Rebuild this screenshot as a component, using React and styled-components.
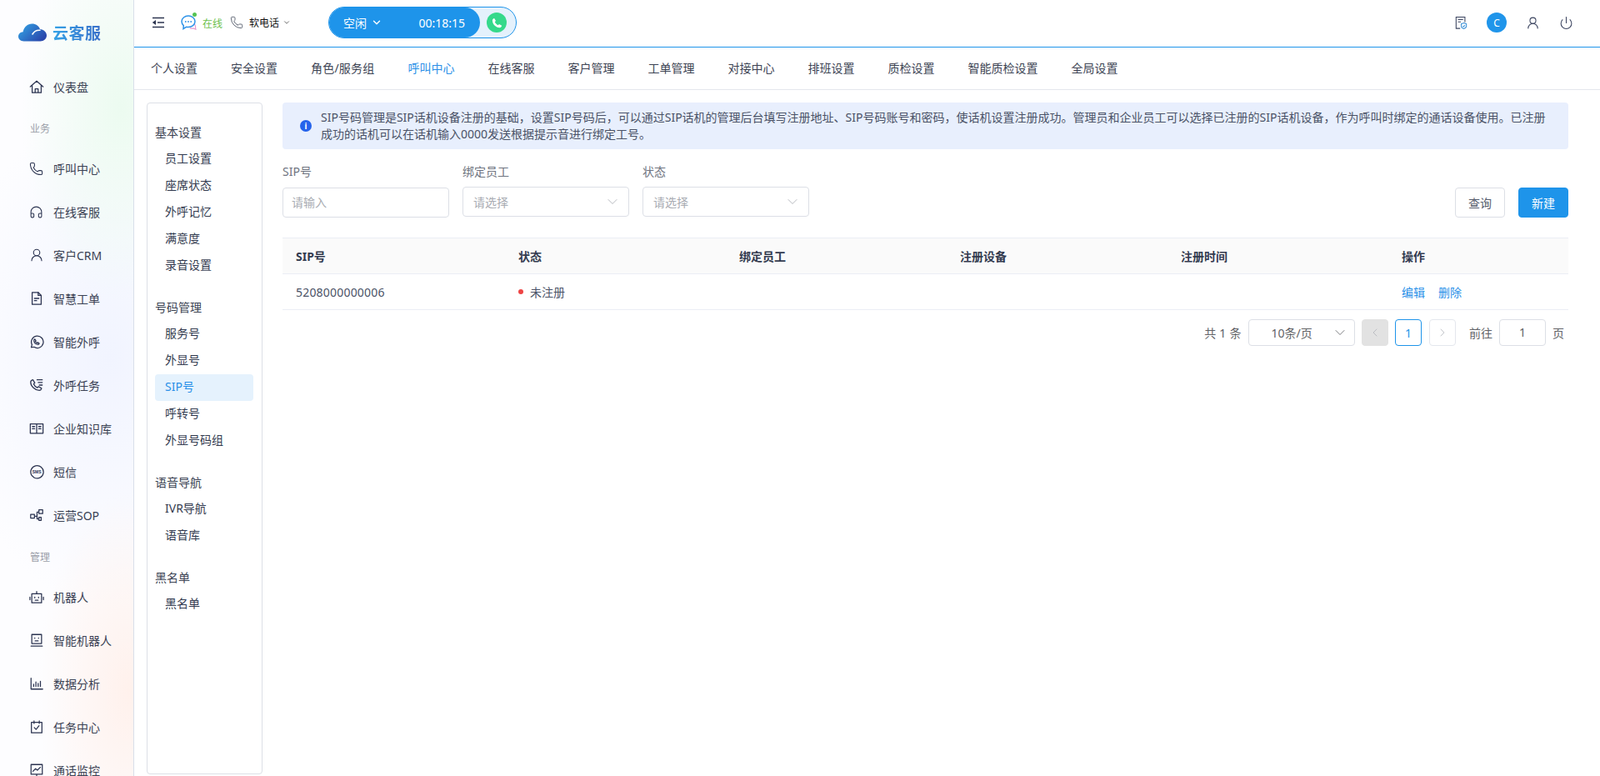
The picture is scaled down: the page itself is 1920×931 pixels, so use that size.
import React from "react";
import styled, { createGlobalStyle } from "styled-components";
import {
  Phone,
  Headphones,
  UserRound,
  ChevronDown,
  ChevronLeft,
  ChevronRight,
  Power,
} from "lucide-react";

const FONT = `"Noto Sans", "Noto Sans CJK SC", sans-serif`;

const GlobalStyle = createGlobalStyle`
  html, body, #root {
    margin: 0;
    height: 100%;
    overflow: hidden;
  }
  body {
    font-family: ${FONT};
    font-size: 14px;
    color: #333b4f;
    background: #fff;
  }
  * {
    box-sizing: border-box;
  }
`;

const Line = ({ children, size = 18 }) => (
  <svg width={size} height={size} viewBox="0 0 20 20" fill="none" stroke="currentColor" strokeWidth="1.4" strokeLinecap="round" strokeLinejoin="round">
    {children}
  </svg>
);

const sideIcons = {
  house: (
    <Line>
      <path d="M1.500 10 10 2.500 18.500 10M4 8v10h12V8M8 18v-5h4v5" />
    </Line>
  ),
  phone: <Phone size={17} strokeWidth={1.5} />,
  headset: <Headphones size={17} strokeWidth={1.5} />,
  user: <UserRound size={18} strokeWidth={1.5} />,
  ticket: (
    <Line>
      <path d="M4 2h8l4 4v12H4Z" />
      <path d="M12 2v4h4M7 10h6M7 13h3" />
    </Line>
  ),
  whatsapp: (
    <Line>
      <path d="M2.800 17.500 3.800 14A8 8 0 1 1 6.500 17Z" />
      <path d="M7.500 6.500 9 8.500l-.8 1c.5.900 1.200 1.600 2.200 2.100l1-.8 2 1.400c-.3 1.100-1 1.500-1.900 1.400-2.900-.4-4.900-2.500-5.100-5-.1-1 .4-1.900 1.100-2.100Z" />
    </Line>
  ),
  outcall: (
    <Line>
      <path d="M5 3 7.500 7 6 8.500c.8 2 2.700 4 5 5l1.500-1.500 4 2.300c-.4 1.800-1.600 2.700-3.100 2.700C8 17 2 11.500 2 6.300 2 4.700 3.200 3.400 5 3Z" />
      <path d="M10.500 3h7M12 6.500h5.500M13.500 10h4" />
    </Line>
  ),
  book: (
    <Line>
      <path d="M1.500 4h17v12.500h-17ZM10 4v12.500M4.300 7.500h3M4.300 10.500h3M12.700 7.500h3M12.700 10.500h3" />
    </Line>
  ),
  sms: (
    <svg width="18" height="18" viewBox="0 0 20 20" fill="none" stroke="currentColor" strokeWidth="1.4">
      <path d="M3.500 15A8.500 8.500 0 1 1 7 18Z" strokeLinejoin="round" />
      <text x="10.200" y="12" fontSize="5.500" fontWeight="700" textAnchor="middle" fill="currentColor" stroke="none" fontFamily="Liberation Sans, sans-serif">SMS</text>
    </svg>
  ),
  sop: (
    <Line>
      <path d="M2 9h5v5H2ZM13 3h5v5h-5ZM13 13h3v4h-3ZM7 11.500h3.500V6H13M10.500 11.500V15H13" />
    </Line>
  ),
  bot: (
    <Line>
      <path d="M3.500 6h13v12h-13ZM10 6V3M1 10.500v3.500M19 10.500v3.500M7.500 10.500v1M12.500 10.500v1M8 14.500h4" />
    </Line>
  ),
  face: (
    <Line>
      <path d="M3.500 2.500h13v12h-13ZM2.500 18h15M7.500 7v.6M12.500 7v.6M8 11h4" />
    </Line>
  ),
  chart: (
    <Line>
      <path d="M2.500 3v14.500h15.500M6 14v-3M9 14V8M12 14v-4M15 14V7" />
    </Line>
  ),
  task: (
    <Line>
      <path d="M3 4h14v14H3ZM6.500 2v3.500M13.500 2v3.500M6.800 11l2.400 2.500 4-5" />
    </Line>
  ),
  monitor: (
    <Line>
      <path d="M2.500 2.500h15v13h-15ZM10 15.500V18M5 11.500l3.500-3.500 2.500 2 4-4" />
    </Line>
  ),
};

const menu = [
  { type: "item", icon: "house", text: "仪表盘" },
  { type: "label", text: "业务" },
  { type: "item", icon: "phone", text: "呼叫中心" },
  { type: "item", icon: "headset", text: "在线客服" },
  { type: "item", icon: "user", text: "客户CRM" },
  { type: "item", icon: "ticket", text: "智慧工单" },
  { type: "item", icon: "whatsapp", text: "智能外呼" },
  { type: "item", icon: "outcall", text: "外呼任务" },
  { type: "item", icon: "book", text: "企业知识库" },
  { type: "item", icon: "sms", text: "短信" },
  { type: "item", icon: "sop", text: "运营SOP" },
  { type: "label", text: "管理" },
  { type: "item", icon: "bot", text: "机器人" },
  { type: "item", icon: "face", text: "智能机器人" },
  { type: "item", icon: "chart", text: "数据分析" },
  { type: "item", icon: "task", text: "任务中心" },
  { type: "item", icon: "monitor", text: "通话监控" },
];

const tabs = ["个人设置", "安全设置", "角色/服务组", "呼叫中心", "在线客服", "客户管理", "工单管理", "对接中心", "排班设置", "质检设置", "智能质检设置", "全局设置"];

const tree = [
  { title: "基本设置", items: ["员工设置", "座席状态", "外呼记忆", "满意度", "录音设置"] },
  { title: "号码管理", items: ["服务号", "外显号", "SIP号", "呼转号", "外显号码组"] },
  { title: "语音导航", items: ["IVR导航", "语音库"] },
  { title: "黑名单", items: ["黑名单"] },
];

const columns = ["SIP号", "状态", "绑定员工", "注册设备", "注册时间", "操作"];

const App = () => {
  return (
    <>
      <GlobalStyle />
      <Page>
        <Sidebar>
          <Logo>
            <svg width="34" height="22" viewBox="0 0 34 22">
              <defs>
                <linearGradient id="cloud" x1="0" y1="0" x2="1" y2="0.6">
                  <stop offset="0" stopColor="#33a8e8" />
                  <stop offset="1" stopColor="#2a49ad" />
                </linearGradient>
              </defs>
              <path fill="url(#cloud)" d="M6.500 21.500C2.800 21.500 0 19 0 15.800 0 12.800 2.400 10.400 5.600 10.200 6.800 4.400 11 .5 16.500.5 21 .5 24.600 3 26 7c4.500.4 8 3.600 8 7.500 0 4-3.400 7-7.500 7Z" />
              <path fill="none" stroke="#fff" strokeWidth="1.600" strokeLinecap="round" d="M17 13c2-3.500 5-5 9-4.700" />
            </svg>
            <LogoText>云客服</LogoText>
          </Logo>
          {menu.map((m, i) =>
            m.type === "label" ? (
              <SideLabel key={i}>{m.text}</SideLabel>
            ) : (
              <SideItem key={i}>
                <SideIcon>{sideIcons[m.icon]}</SideIcon>
                {m.text}
              </SideItem>
            )
          )}
        </Sidebar>
        <Main>
          <Header>
            <IndentIcon width="16" height="14" viewBox="0 0 16 14">
              <path d="M1 1.500h14M7 7h8M1 12.500h14" stroke="#2c3550" strokeWidth="1.500" fill="none" />
              <path d="M.8 7 5 4v6Z" fill="#2c3550" />
            </IndentIcon>
            <OnlineIcon>
              <svg width="19" height="18" viewBox="0 0 19 18" fill="none">
                <path d="M16.500 11c.8 1.200 1.300 2.500 1 4l.4 2.200-2.900-1.200c-1.600.4-3 .2-4.200-.4" stroke="#e49ad0" strokeWidth="1.200" />
                <path d="M9 1c4.400 0 8 3 8 6.800s-3.600 6.800-8 6.800c-.8 0-1.700-.1-2.400-.3L3 16.500l.3-3.900C1.900 11.400 1 9.700 1 7.800 1 4 4.600 1 9 1Z" stroke="#2f93e8" strokeWidth="1.500" />
                <circle cx="5.800" cy="8" r=".9" fill="#2f93e8" />
                <circle cx="9" cy="8" r=".9" fill="#2f93e8" />
                <circle cx="12.200" cy="8" r=".9" fill="#2f93e8" />
              </svg>
              <OnlineDot />
            </OnlineIcon>
            <OnlineText>在线</OnlineText>
            <HeaderPhone>
              <Phone size={16} strokeWidth={1.4} />
            </HeaderPhone>
            <SoftPhone>
              软电话
              <ChevronDown size={10} strokeWidth={2} color="#555" />
            </SoftPhone>
            <CallPill>
              <CallStatus>
                <StatusPick>
                  空闲
                  <ChevronDown size={14} strokeWidth={2.4} />
                </StatusPick>
                <CallTime>00:18:15</CallTime>
              </CallStatus>
              <CallButton>
                <svg width="15" height="15" viewBox="0 0 20 20">
                  <path fill="#fff" d="M5.500 2.500 8 6.600 6.400 8.300c.9 2.200 2.900 4.300 5.200 5.300l1.700-1.600 4.200 2.400c-.4 2-1.700 3.100-3.400 3.100C8 17.500 2.500 11.800 2.500 6c0-1.800 1.200-3.100 3-3.500Z" />
                </svg>
              </CallButton>
            </CallPill>
            <HeaderRight>
              <svg width="15" height="17" viewBox="0 0 17 18" fill="none" stroke="#3c4560" strokeWidth="1.200">
                <path d="M7 16.500H1.500V1h12v7" />
                <path d="M4 4.500h7M4 7.500h4" />
                <path d="M12 9l3.500 1.300v3c0 1.800-1.500 3-3.500 3.700-2-.7-3.500-1.900-3.500-3.700v-3Z" stroke="#3f93d8" />
                <path d="M10.500 13l1.200 1.200 2-2.200" stroke="#3f93d8" />
              </svg>
              <Avatar>C</Avatar>
              <UserRound size={17} strokeWidth={1.5} color="#3c4560" />
              <Power size={17} strokeWidth={1.5} color="#3c4560" />
            </HeaderRight>
          </Header>
          <Tabs>
            {tabs.map((t) => (
              <Tab key={t} $active={t === "呼叫中心"} $wide={t.includes("/")}>
                {t}
              </Tab>
            ))}
          </Tabs>
          <Body>
            <TreePanel>
              {tree.map((g) => (
                <TreeGroup key={g.title}>
                  <TreeTitle>{g.title}</TreeTitle>
                  {g.items.map((it) => (
                    <TreeItem key={it} $active={it === "SIP号"}>
                      {it}
                    </TreeItem>
                  ))}
                </TreeGroup>
              ))}
            </TreePanel>
            <Content>
              <Alert>
                <AlertIcon>i</AlertIcon>
                <AlertText>
                  SIP号码管理是SIP话机设备注册的基础，设置SIP号码后，可以通过SIP话机的管理后台填写注册地址、SIP号码账号和密码，使话机设置注册成功。管理员和企业员工可以选择已注册的SIP话机设备，作为呼叫时绑定的通话设备使用。已注册成功的话机可以在话机输入0000发送根据提示音进行绑定工号。
                </AlertText>
              </Alert>
              <Filters>
                <Field>
                  <FieldLabel>SIP号</FieldLabel>
                  <TextInput placeholder="请输入" readOnly />
                </Field>
                <Field>
                  <FieldLabel>绑定员工</FieldLabel>
                  <FakeSelect>
                    请选择
                    <ChevronDown size={20} strokeWidth={1} color="#a8abb2" />
                  </FakeSelect>
                </Field>
                <Field>
                  <FieldLabel>状态</FieldLabel>
                  <FakeSelect>
                    请选择
                    <ChevronDown size={20} strokeWidth={1} color="#a8abb2" />
                  </FakeSelect>
                </Field>
                <Actions>
                  <Button>查询</Button>
                  <Button $primary>新建</Button>
                </Actions>
              </Filters>
              <TableHead>
                {columns.map((c) => (
                  <HeadCell key={c}>{c}</HeadCell>
                ))}
              </TableHead>
              <TableRow>
                <NumberCell>5208000000006</NumberCell>
                <Cell>
                  <RedDot />
                  未注册
                </Cell>
                <Cell />
                <Cell />
                <Cell />
                <Cell>
                  <LinkText>编辑</LinkText>
                  <LinkText>删除</LinkText>
                </Cell>
              </TableRow>
              <Pager>
                <TotalText>共 1 条</TotalText>
                <SizeSelect>
                  10条/页
                  <ChevronDown size={20} strokeWidth={1} color="#606266" />
                </SizeSelect>
                <PageBtn $disabled>
                  <ChevronLeft size={16} strokeWidth={1} />
                </PageBtn>
                <PageBtn $current>1</PageBtn>
                <PageBtn>
                  <ChevronRight size={16} strokeWidth={1} />
                </PageBtn>
                <PagerText>前往</PagerText>
                <JumpBox>1</JumpBox>
                <PagerText>页</PagerText>
              </Pager>
            </Content>
          </Body>
        </Main>
      </Page>
    </>
  );
};

const Page = styled.div`
  display: flex;
  height: 100vh;
  overflow: hidden;
`;

const Sidebar = styled.aside`
  flex: 0 0 161px;
  height: 100%;
  overflow: hidden;
  border-right: 1px solid #d9dfea;
  background:
    radial-gradient(ellipse 120px 230px at 145px 130px, #ecfbf0 0%, rgba(236, 251, 240, 0) 100%),
    radial-gradient(ellipse 110px 240px at 155px 830px, #fff1ec 0%, rgba(255, 241, 236, 0) 100%),
    radial-gradient(ellipse 190px 300px at 130px 430px, #f1f4ff 0%, rgba(241, 244, 255, 0) 100%),
    #fdfdff;
`;

const Logo = styled.div`
  height: 78px;
  display: flex;
  align-items: center;
  gap: 7px;
  padding-left: 22px;
`;

const LogoText = styled.span`
  font-size: 19px;
  font-weight: 700;
  letter-spacing: 0.5px;
  color: transparent;
  background: linear-gradient(90deg, #35a2e6, #3a6fc9);
  background-clip: text;
  -webkit-background-clip: text;
`;

const SideItem = styled.div`
  height: 52px;
  display: flex;
  align-items: center;
  padding-left: 35px;
  font-size: 14px;
  color: #3a4153;
`;

const SideIcon = styled.span`
  width: 29px;
  display: flex;
  align-items: center;
  color: #2b3350;
`;

const SideLabel = styled.div`
  height: 46px;
  display: flex;
  align-items: center;
  padding: 2px 0 0 36px;
  font-size: 12px;
  color: #9a9ea8;
`;

const Main = styled.div`
  flex: 1;
  min-width: 0;
  display: flex;
  flex-direction: column;
`;

const Header = styled.header`
  flex: 0 0 57px;
  display: flex;
  align-items: center;
  padding: 0 32px 2px 21px;
  border-bottom: 1px solid #1e94ea;
`;

const IndentIcon = styled.svg`
  margin-right: 19px;
`;

const OnlineIcon = styled.span`
  position: relative;
  display: flex;
  margin-right: 7px;
`;

const OnlineDot = styled.i`
  position: absolute;
  top: -3px;
  right: 0;
  width: 5px;
  height: 5px;
  border-radius: 50%;
  background: #55c353;
`;

const OnlineText = styled.span`
  font-size: 12px;
  color: #6cc04a;
  margin-right: 9px;
  padding-top: 2px;
`;

const HeaderPhone = styled.span`
  display: flex;
  color: #555c6c;
  margin-right: 7px;
`;

const SoftPhone = styled.span`
  display: flex;
  align-items: center;
  gap: 4px;
  font-size: 12px;
  color: #111;
  margin-right: 45px;
`;

const CallPill = styled.div`
  width: 226px;
  height: 38px;
  display: flex;
  align-items: center;
  border: 1px solid #1e94ea;
  border-radius: 19px;
  background: #e4f1fc;
`;

const CallStatus = styled.div`
  width: 181px;
  height: 36px;
  display: flex;
  align-items: center;
  justify-content: space-between;
  padding: 0 18px 0 17px;
  border-radius: 18px;
  background: #1e94ea;
  color: #fff;
`;

const StatusPick = styled.span`
  display: flex;
  align-items: center;
  gap: 5px;
  font-size: 14px;
`;

const CallTime = styled.span`
  font-size: 14px;
`;

const CallButton = styled.span`
  width: 24px;
  height: 24px;
  margin-left: 8px;
  display: flex;
  align-items: center;
  justify-content: center;
  border-radius: 50%;
  background: #35d98b;
`;

const HeaderRight = styled.div`
  margin-left: auto;
  display: flex;
  align-items: center;
  gap: 23px;
`;

const Avatar = styled.span`
  width: 24px;
  height: 24px;
  display: flex;
  align-items: center;
  justify-content: center;
  border-radius: 50%;
  background: #2095ea;
  color: #fff;
  font-size: 12px;
`;

const Tabs = styled.nav`
  flex: 0 0 51px;
  display: flex;
  align-items: center;
  gap: 40px;
  padding: 0 0 2px 20px;
  border-bottom: 1px solid #e4e7ed;
`;

const Tab = styled.span`
  font-size: 14px;
  letter-spacing: ${(p) => (p.$wide ? "0.2px" : "0")};
  color: ${(p) => (p.$active ? "#2a90e8" : "#3c4353")};
`;

const Body = styled.div`
  flex: 1;
  min-height: 0;
  display: flex;
  gap: 24px;
  padding: 15px 38px 2px 15px;
`;

const TreePanel = styled.div`
  flex: 0 0 139px;
  padding: 19px 10px 0 9px;
  border: 1px solid #dcdfe6;
  border-radius: 4px;
`;

const TreeGroup = styled.div`
  margin-bottom: 18px;
`;

const TreeTitle = styled.div`
  height: 32px;
  line-height: 31px;
  font-size: 14px;
  color: #3c4353;
`;

const TreeItem = styled.div`
  height: 32px;
  line-height: 30px;
  padding-left: 12px;
  border-radius: 4px;
  font-size: 14px;
  color: ${(p) => (p.$active ? "#2a90e8" : "#333b4f")};
  background: ${(p) => (p.$active ? "#e5f2fd" : "transparent")};
`;

const Content = styled.div`
  flex: 1;
  min-width: 0;
`;

const Alert = styled.div`
  height: 56px;
  display: flex;
  align-items: center;
  gap: 11px;
  padding: 0 20px 0 21px;
  border-radius: 4px;
  background: #e8effd;
`;

const AlertIcon = styled.span`
  flex: 0 0 14px;
  height: 14px;
  border-radius: 50%;
  background: #2563eb;
  color: #fff;
  font-size: 10px;
  font-weight: 700;
  line-height: 14px;
  text-align: center;
`;

const AlertText = styled.div`
  font-size: 14px;
  line-height: 20px;
  color: #4a5266;
`;

const Filters = styled.div`
  display: flex;
  align-items: flex-end;
  gap: 16px;
  margin-top: 17px;
`;

const Field = styled.div`
  width: 200px;
`;

const FieldLabel = styled.div`
  height: 20px;
  line-height: 20px;
  margin-bottom: 9px;
  font-size: 14px;
  color: #6f7480;
`;

const TextInput = styled.input`
  display: block;
  width: 100%;
  height: 36px;
  padding: 0 10px 2px;
  border: 1px solid #dcdfe6;
  border-radius: 4px;
  outline: none;
  font-family: ${FONT};
  font-size: 14px;
  &::placeholder {
    color: #a8abb2;
  }
`;

const FakeSelect = styled.div`
  height: 36px;
  margin: -1px 0 1px;
  display: flex;
  align-items: center;
  justify-content: space-between;
  padding: 0 9px 0 12px;
  border: 1px solid #dcdfe6;
  border-radius: 4px;
  font-size: 14px;
  color: #a8abb2;
`;

const Actions = styled.div`
  margin-left: auto;
  display: flex;
  gap: 16px;
`;

const Button = styled.button`
  width: 60px;
  height: 36px;
  padding: 0;
  border: 1px solid ${(p) => (p.$primary ? "#1e94ea" : "#dcdfe6")};
  border-radius: 4px;
  font-family: ${FONT};
  font-size: 14px;
  color: ${(p) => (p.$primary ? "#fff" : "#555c6c")};
  background: ${(p) => (p.$primary ? "#1e94ea" : "#fff")};
`;

const grid = "267px 265px 265px 265px 265px 1fr";

const TableHead = styled.div`
  display: grid;
  grid-template-columns: ${grid};
  height: 44px;
  margin-top: 24px;
  border-top: 1px solid #ebeef5;
  border-bottom: 1px solid #ebeef5;
  background: #fafafa;
`;

const HeadCell = styled.div`
  display: flex;
  align-items: center;
  padding-left: 16px;
  font-size: 14px;
  font-weight: 700;
  color: #333b4f;
`;

const TableRow = styled.div`
  display: grid;
  grid-template-columns: ${grid};
  height: 43px;
  border-bottom: 1px solid #ebeef5;
`;

const Cell = styled.div`
  display: flex;
  align-items: center;
  padding-left: 16px;
  font-size: 14px;
  color: #4a5266;
`;

const NumberCell = styled(Cell)`
  letter-spacing: 0.2px;
`;

const RedDot = styled.i`
  width: 6px;
  height: 6px;
  margin-right: 8px;
  border-radius: 50%;
  background: #ee4444;
`;

const LinkText = styled.span`
  color: #2a90e8;
  margin-right: 16px;
`;

const Pager = styled.div`
  display: flex;
  align-items: center;
  justify-content: flex-end;
  height: 32px;
  margin-top: 11px;
`;

const PagerText = styled.span`
  font-size: 14px;
  color: #606266;
  margin: 0 8px;
  &:last-child {
    margin-right: 5px;
  }
`;

const TotalText = styled(PagerText)`
  word-spacing: 0.5px;
`;

const SizeSelect = styled.div`
  width: 128px;
  height: 32px;
  display: flex;
  align-items: center;
  justify-content: space-between;
  padding: 0 7px 0 27px;
  border: 1px solid #dcdfe6;
  border-radius: 4px;
  font-size: 14px;
  color: #606266;
  margin-right: 8px;
`;

const PageBtn = styled.div`
  width: 32px;
  height: 32px;
  display: flex;
  align-items: center;
  justify-content: center;
  margin-right: 8.5px;
  border-radius: 4px;
  font-size: 14px;
  color: ${(p) => (p.$current ? "#1e94ea" : "#a8abb2")};
  border: 1px solid ${(p) => (p.$current ? "#1e94ea" : p.$disabled ? "#e2e2e2" : "#e4e7ed")};
  background: ${(p) => (p.$disabled ? "#e2e2e2" : "#fff")};
`;

const JumpBox = styled.div`
  width: 56px;
  height: 32px;
  line-height: 30px;
  text-align: center;
  border: 1px solid #dcdfe6;
  border-radius: 4px;
  font-size: 14px;
  color: #606266;
`;

export default App;
